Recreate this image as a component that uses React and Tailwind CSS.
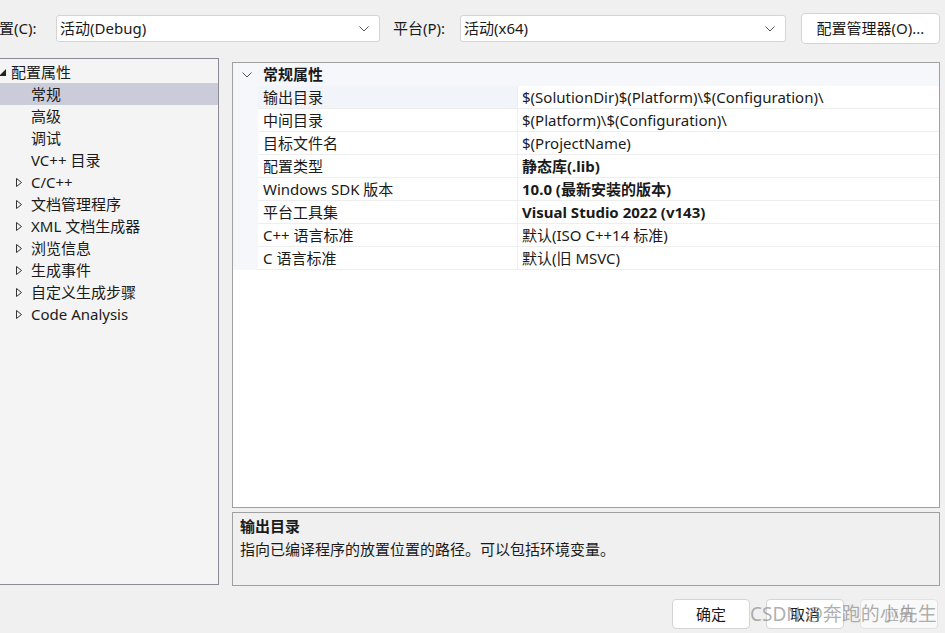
import React from 'react';

const font = { fontFamily: '"Segoe UI", "Noto Sans", "Noto Sans CJK SC", sans-serif' };

const tree = [
  { label: '常规', selected: true },
  { label: '高级' },
  { label: '调试' },
  { label: 'VC++ 目录' },
  { label: 'C/C++', arrow: true },
  { label: '文档管理程序', arrow: true },
  { label: 'XML 文档生成器', arrow: true },
  { label: '浏览信息', arrow: true },
  { label: '生成事件', arrow: true },
  { label: '自定义生成步骤', arrow: true },
  { label: 'Code Analysis', arrow: true },
];

const props = [
  { name: '输出目录', value: '$(SolutionDir)$(Platform)\\$(Configuration)\\', active: true },
  { name: '中间目录', value: '$(Platform)\\$(Configuration)\\' },
  { name: '目标文件名', value: '$(ProjectName)' },
  { name: '配置类型', value: '静态库(.lib)', bold: true },
  { name: 'Windows SDK 版本', value: '10.0 (最新安装的版本)', bold: true },
  { name: '平台工具集', value: 'Visual Studio 2022 (v143)', bold: true },
  { name: 'C++ 语言标准', value: '默认(ISO C++14 标准)' },
  { name: 'C 语言标准', value: '默认(旧 MSVC)' },
];

const Chevron = () => (
  <svg width="10" height="6" viewBox="0 0 10 6" fill="none" stroke="#555" strokeWidth="1">
    <path d="M0.5 0.5 L5 5 L9.5 0.5" />
  </svg>
);

const Combo = ({ text, width }) => (
  <div className={`h-[27px] ${width} bg-white border border-[#d4d4d4] rounded-[3px] flex items-center pl-[3px] pr-[10px] justify-between`}>
    <span>{text}</span>
    <Chevron />
  </div>
);

export default function App() {
  return (
    <div className="w-[945px] h-[633px] bg-[#f0f0f0] overflow-hidden relative text-[15px] text-[#1a1a1a]" style={font}>
      {/* top bar */}
      <div className="flex items-center h-[31px] mt-[13px]">
        <span className="-ml-[16px] w-[72px]">配置(C):</span>
        <Combo text="活动(Debug)" width="w-[324px]" />
        <span className="ml-[13px] w-[67px]">平台(P):</span>
        <Combo text="活动(x64)" width="w-[326px]" />
        <button className="ml-[15px] w-[139px] h-[31px] bg-white border border-[#d4d4d4] rounded-[4px]">配置管理器(O)...</button>
      </div>

      <div className="flex mt-[14px]">
        {/* tree */}
        <div className="w-[219px] h-[527px] bg-[#f4f4f4] border-t border-r border-b border-[#8b8a95] pt-[2px]">
          <div className="h-[22px] flex items-center">
            <svg width="7" height="7" viewBox="0 0 7 7" className="-ml-[1px]">
              <path d="M7 0 L7 7 L0 7 Z" fill="#222" />
            </svg>
            <span className="ml-[5px]">配置属性</span>
          </div>
          {tree.map((t) => (
            <div key={t.label} className={`h-[22px] flex items-center ${t.selected ? 'bg-[#cbccda]' : ''}`}>
              <span className="w-[31px] flex justify-end pr-[9px]">
                {t.arrow && (
                  <svg width="6" height="9" viewBox="0 0 6 9" fill="none" stroke="#333" strokeWidth="1">
                    <path d="M0.5 0.5 L5.5 4.5 L0.5 8.5 Z" />
                  </svg>
                )}
              </span>
              <span>{t.label}</span>
            </div>
          ))}
        </div>

        {/* right side */}
        <div className="ml-[13px] w-[708px] flex flex-col mt-[4px]">
          <div className="h-[446px] bg-white border border-[#a0a0a0]">
            <div className="h-[23px] flex items-center bg-[#f5f7fa]">
              <span className="w-[30px] flex justify-center pr-[3px]">
                <Chevron />
              </span>
              <span className="font-bold">常规属性</span>
            </div>
            {props.map((p) => (
              <div key={p.name} className="h-[23px] flex">
                <div className="w-[25px] bg-[#f5f7fa]" />
                <div className={`w-[259px] pl-[5px] flex items-center border-b border-[#eeeeee] ${p.active ? 'bg-[#f1f4f9]' : ''}`}>
                  {p.name}
                </div>
                <div className={`flex-1 pl-[4px] flex items-center border-b border-l border-[#eeeeee] ${p.bold ? 'font-bold' : ''}`}>
                  {p.value}
                </div>
              </div>
            ))}
          </div>
          <div className="mt-[4px] h-[74px] border border-[#a0a0a0] px-[7px] pt-[2px] leading-[23px]">
            <div className="font-bold">输出目录</div>
            <div>指向已编译程序的放置位置的路径。可以包括环境变量。</div>
          </div>
        </div>
      </div>

      {/* buttons */}
      <div className="flex justify-end gap-[16px] pr-[7px] mt-[13px]">
        <button className="w-[78px] h-[30px] bg-white border border-[#d4d4d4] rounded-[4px]">确定</button>
        <button className="w-[78px] h-[30px] bg-white border border-[#d4d4d4] rounded-[4px]">取消</button>
        <button className="w-[78px] h-[30px] bg-[#f9f9f9] border border-[#e2e2e2] rounded-[4px] text-[#b5b5b5]">应用</button>
      </div>
      <div className="absolute left-[750px] top-[600px] text-[19px] text-[#8c8c8c]/70 whitespace-nowrap pointer-events-none">
        CSDN @奔跑的小先生
      </div>
    </div>
  );
}
